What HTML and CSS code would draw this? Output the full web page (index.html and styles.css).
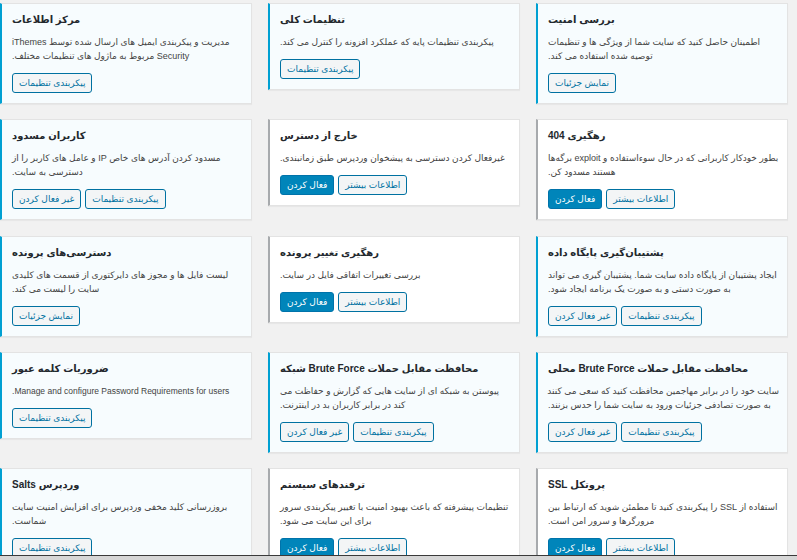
FILE: index.html
```html
<!DOCTYPE html>
<html lang="fa" dir="rtl">
<head>
<meta charset="utf-8">
<title>ماژول‌های امنیتی</title>
<link rel="stylesheet" href="styles.css">
</head>
<body>
<main class="modules">
  <!-- row 1 -->
  <section class="card active">
    <h3 class="card-title">بررسی امنیت</h3>
    <p class="card-desc">اطمینان حاصل کنید که سایت شما از ویژگی ها و تنظیمات<br>توصیه شده استفاده می کند.</p>
    <div class="card-actions"><button class="btn">نمایش جزئیات</button></div>
  </section>
  <section class="card active">
    <h3 class="card-title">تنظیمات کلی</h3>
    <p class="card-desc">پیکربندی تنظیمات پایه که عملکرد افزونه را کنترل می کند.</p>
    <div class="card-actions"><button class="btn">پیکربندی تنظیمات</button></div>
  </section>
  <section class="card active">
    <h3 class="card-title">مرکز اطلاعات</h3>
    <p class="card-desc">مدیریت و پیکربندی ایمیل های ارسال شده توسط iThemes<br>Security مربوط به ماژول های تنظیمات مختلف.</p>
    <div class="card-actions"><button class="btn">پیکربندی تنظیمات</button></div>
  </section>

  <!-- row 2 -->
  <section class="card">
    <h3 class="card-title">رهگیری 404</h3>
    <p class="card-desc">بطور خودکار کاربرانی که در حال سوءاستفاده و exploit برگه‌ها<br>هستند مسدود کن.</p>
    <div class="card-actions"><button class="btn">اطلاعات بیشتر</button><button class="btn primary">فعال کردن</button></div>
  </section>
  <section class="card">
    <h3 class="card-title">خارج از دسترس</h3>
    <p class="card-desc">غیرفعال کردن دسترسی به پیشخوان وردپرس طبق زمانبندی.</p>
    <div class="card-actions"><button class="btn">اطلاعات بیشتر</button><button class="btn primary">فعال کردن</button></div>
  </section>
  <section class="card active">
    <h3 class="card-title">کاربران مسدود</h3>
    <p class="card-desc">مسدود کردن آدرس های خاص IP و عامل های کاربر را از<br>دسترسی به سایت.</p>
    <div class="card-actions"><button class="btn">پیکربندی تنظیمات</button><button class="btn">غیر فعال کردن</button></div>
  </section>

  <!-- row 3 -->
  <section class="card active">
    <h3 class="card-title">پشتیبان‌گیری پایگاه داده</h3>
    <p class="card-desc">ایجاد پشتیبان از پایگاه داده سایت شما. پشتیبان گیری می تواند<br>به صورت دستی و به صورت یک برنامه ایجاد شود.</p>
    <div class="card-actions"><button class="btn">پیکربندی تنظیمات</button><button class="btn">غیر فعال کردن</button></div>
  </section>
  <section class="card">
    <h3 class="card-title">رهگیری تغییر پرونده</h3>
    <p class="card-desc">بررسی تغییرات اتفاقی فایل در سایت.</p>
    <div class="card-actions"><button class="btn">اطلاعات بیشتر</button><button class="btn primary">فعال کردن</button></div>
  </section>
  <section class="card active">
    <h3 class="card-title">دسترسی‌های پرونده</h3>
    <p class="card-desc">لیست فایل ها و مجوز های دایرکتوری از قسمت های کلیدی<br>سایت را لیست می کند.</p>
    <div class="card-actions"><button class="btn">نمایش جزئیات</button></div>
  </section>

  <!-- row 4 -->
  <section class="card active">
    <h3 class="card-title">محافظت مقابل حملات Brute Force محلی</h3>
    <p class="card-desc">سایت خود را در برابر مهاجمین محافظت کنید که سعی می کنند<br>به صورت تصادفی جزئیات ورود به سایت شما را حدس بزنند.</p>
    <div class="card-actions"><button class="btn">پیکربندی تنظیمات</button><button class="btn">غیر فعال کردن</button></div>
  </section>
  <section class="card active">
    <h3 class="card-title">محافظت مقابل حملات Brute Force شبکه</h3>
    <p class="card-desc">پیوستن به شبکه ای از سایت هایی که گزارش و حفاظت می<br>کند در برابر کاربران بد در اینترنت.</p>
    <div class="card-actions"><button class="btn">پیکربندی تنظیمات</button><button class="btn">غیر فعال کردن</button></div>
  </section>
  <section class="card active">
    <h3 class="card-title">ضروریات کلمه عبور</h3>
    <p class="card-desc latin">Manage and configure Password Requirements for users.</p>
    <div class="card-actions"><button class="btn">پیکربندی تنظیمات</button></div>
  </section>

  <!-- row 5 -->
  <section class="card">
    <h3 class="card-title">پروتکل SSL</h3>
    <p class="card-desc">استفاده از SSL را پیکربندی کنید تا مطمئن شوید که ارتباط بین<br>مرورگرها و سرور امن است.</p>
    <div class="card-actions"><button class="btn">اطلاعات بیشتر</button><button class="btn primary">فعال کردن</button></div>
  </section>
  <section class="card">
    <h3 class="card-title">ترفندهای سیستم</h3>
    <p class="card-desc">تنظیمات پیشرفته که باعث بهبود امنیت با تغییر پیکربندی سرور<br>برای این سایت می شود.</p>
    <div class="card-actions"><button class="btn">اطلاعات بیشتر</button><button class="btn primary">فعال کردن</button></div>
  </section>
  <section class="card active">
    <h3 class="card-title">وردپرس Salts</h3>
    <p class="card-desc">بروزرسانی کلید مخفی وردپرس برای افزایش امنیت سایت<br>شماست.</p>
    <div class="card-actions"><button class="btn">پیکربندی تنظیمات</button></div>
  </section>
</main>
<div class="scrollbar"></div>
</body>
</html>
```
FILE: styles.css
```css
* { box-sizing: border-box; }

html, body {
  margin: 0;
  padding: 0;
  background: #f1f1f1;
  height: 100%;
  overflow: hidden;
}

body {
  font-family: "Liberation Sans", "DejaVu Sans", sans-serif;
  color: #444;
  direction: rtl;
}

.modules {
  display: grid;
  grid-template-columns: repeat(3, 252px);
  column-gap: 16px;
  row-gap: 16.3px;
  grid-auto-rows: 100px;
  align-items: start;
  justify-content: start;
  padding: 3px 9px 0 0;
}

.card {
  background: #fff;
  border: 1px solid #e3e3e3;
  border-left: 2px solid #a7aaad;
  box-shadow: 0 1px 1px rgba(0, 0, 0, 0.04);
  padding: 8px 8px 10px 10px;
  text-align: left;
}

.card.active {
  background: #f7fcfe;
  border-left-color: #00a0d2;
}

.card-title {
  margin: 0;
  font-size: 10px;
  line-height: 16px;
  font-weight: bold;
  color: #23282d;
  white-space: nowrap;
}

.card-desc {
  margin: 7px 0 10px;
  font-size: 9px;
  line-height: 14px;
  color: #444;
  white-space: nowrap;
}

.card-desc.latin {
  font-size: 8.5px;
}

.card-actions {
  display: flex;
  justify-content: flex-end;
  gap: 4px;
}

.btn {
  font-family: inherit;
  font-size: 9px;
  height: 20px;
  line-height: 18px;
  padding: 0 6px;
  border: 1px solid #0071a1;
  border-radius: 3px;
  background: #f3f5f6;
  color: #0071a1;
  margin: 0;
}

.btn.primary {
  background: #0085ba;
  border-color: #0073aa;
  color: #fff;
}

.scrollbar {
  position: fixed;
  left: 0;
  right: 0;
  bottom: 0;
  height: 5px;
  background: #d6d6d6;
  border-top: 1px solid #3a3a3a;
}
```
